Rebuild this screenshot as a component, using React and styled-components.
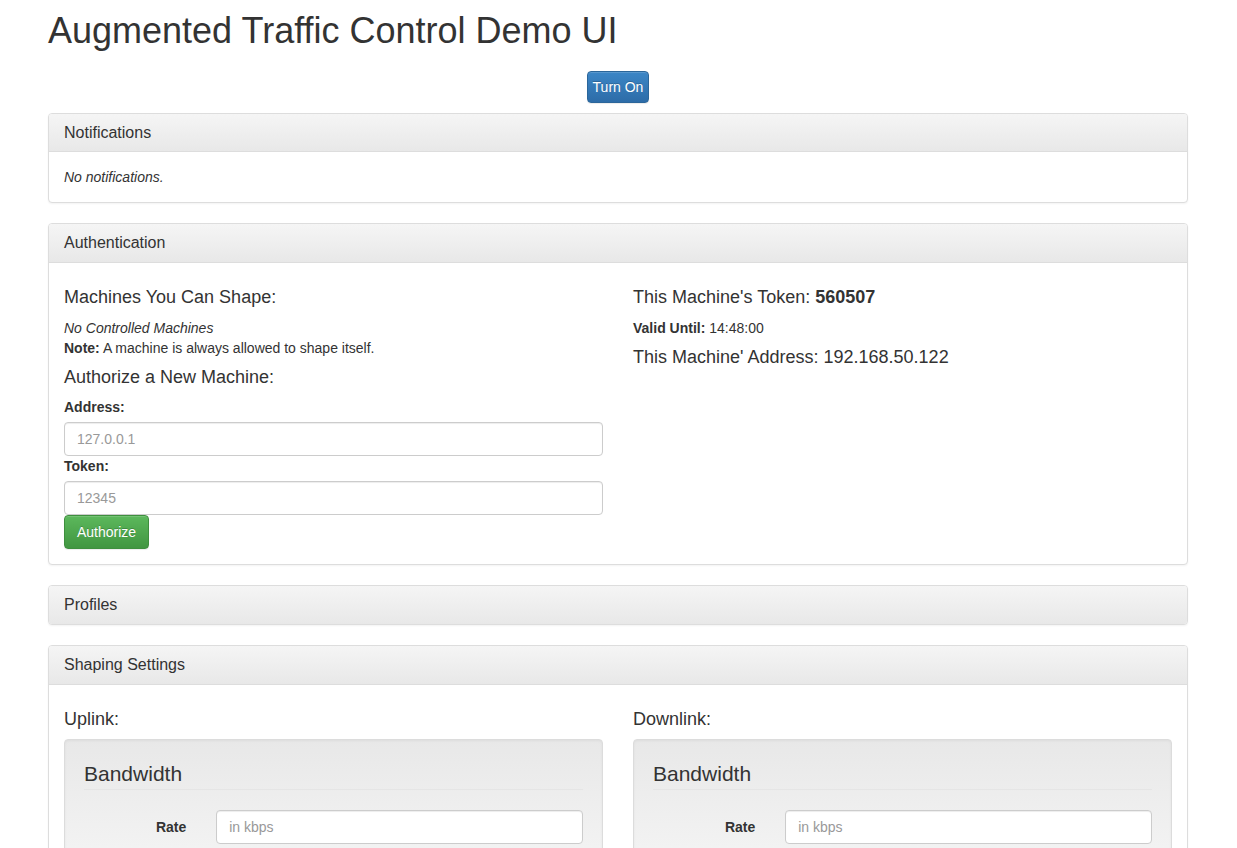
import React from 'react';
import styled, { createGlobalStyle } from 'styled-components';

const GlobalStyle = createGlobalStyle`
  * { box-sizing: border-box; }
  body {
    margin: 0;
    font-family: "Liberation Sans", Arial, sans-serif;
    font-size: 14px;
    line-height: 1.42857143;
    color: #333;
    background: #fff;
  }
  input::placeholder { color: #999; }
`;

const Container = styled.div`
  width: 1170px;
  margin-left: calc((100% - 1170px) / 2 - 0.5px);
  padding: 0 15px;
`;

const Title = styled.h1`
  font-size: 36px;
  font-weight: normal;
  line-height: 1.1;
  margin: 11px 0 10px;
`;

const ButtonBar = styled.div`
  display: flex;
  justify-content: center;
  padding: 10px 0;
`;

const Button = styled.button`
  font-family: inherit;
  font-size: 14px;
  line-height: 20px;
  padding: ${p => (p.$compact ? '5px 5px' : '6px 12px')};
  border-radius: 4px;
  border: 1px solid ${p => (p.$variant === 'success' ? '#3e8f3e' : '#2b669a')};
  color: #fff;
  cursor: pointer;
  text-shadow: 0 -1px 0 rgba(0, 0, 0, 0.2);
  box-shadow: inset 0 1px 0 rgba(255, 255, 255, 0.15), 0 1px 1px rgba(0, 0, 0, 0.075);
  background-image: ${p =>
    p.$variant === 'success'
      ? 'linear-gradient(to bottom, #5cb85c 0, #419641 100%)'
      : 'linear-gradient(to bottom, #3c86c6 0, #2d6ca8 100%)'};
`;

const Panel = styled.section`
  margin-bottom: 20px;
  background: #fff;
  border: 1px solid #ddd;
  border-radius: 4px;
  box-shadow: 0 1px 2px rgba(0, 0, 0, 0.05);
`;

const PanelHeading = styled.div`
  padding: 10px 15px;
  border-bottom: 1px solid #ddd;
  border-radius: 3px 3px 0 0;
  background-image: linear-gradient(to bottom, #f5f5f5 0, #e8e8e8 100%);
  ${p => p.$alone && 'border-bottom: none; border-radius: 3px;'}
`;

const PanelTitle = styled.h3`
  margin: 0;
  font-size: 16px;
  font-weight: normal;
  line-height: 1.1;
`;

const PanelBody = styled.div`
  padding: 15px;
`;

const Row = styled.div`
  display: grid;
  grid-template-columns: 1fr 1fr;
  margin: 0 -15px;
`;

const Col = styled.div`
  padding: 0 15px;
`;

const Heading = styled.h4`
  font-size: 18px;
  font-weight: normal;
  line-height: 1.1;
  margin: 10px 0;
`;

const Line = styled.div`
  font-style: ${p => (p.$italic ? 'italic' : 'normal')};
`;

const Label = styled.label`
  display: inline-block;
  margin-bottom: 5px;
  font-weight: bold;
`;

const Input = styled.input`
  display: block;
  width: 100%;
  height: 34px;
  padding: 6px 12px;
  font-family: inherit;
  font-size: 14px;
  line-height: 20px;
  color: #555;
  background: #fff;
  border: 1px solid #ccc;
  border-radius: 4px;
  box-shadow: inset 0 1px 1px rgba(0, 0, 0, 0.075);
  outline: none;
`;

const Well = styled.div`
  padding: 19px;
  margin-bottom: 20px;
  border: 1px solid #dcdcdc;
  border-radius: 4px;
  background-image: linear-gradient(to bottom, #e8e8e8 0, #f5f5f5 100%);
  box-shadow: inset 0 1px 3px rgba(0, 0, 0, 0.05), 0 1px 0 rgba(255, 255, 255, 0.1);
`;

const Fieldset = styled.fieldset`
  margin: 0;
  padding: 0;
  border: 0;
  min-width: 0;
`;

const Legend = styled.legend`
  display: block;
  width: 100%;
  padding: 0;
  margin-bottom: 20px;
  font-size: 21px;
  line-height: inherit;
  color: #333;
  border-bottom: 1px solid #e5e5e5;
`;

const FormRow = styled.div`
  display: grid;
  grid-template-columns: 3fr 9fr;
  margin: 0 -15px 15px;
`;

const ControlLabel = styled.label`
  padding: 7px 15px 0;
  text-align: right;
  font-weight: bold;
`;

const ControlCell = styled.div`
  padding: 0 15px;
`;

const shaping = [{ legend: 'Bandwidth', fields: [['Rate', 'in kbps']] }];

function LinkSettings({ title }) {
  return (
    <Col>
      <Heading>{title}</Heading>
      {shaping.map(group => (
        <Well key={group.legend}>
          <Fieldset>
            <Legend>{group.legend}</Legend>
            {group.fields.map(([label, hint]) => (
              <FormRow key={label}>
                <ControlLabel>{label}</ControlLabel>
                <ControlCell>
                  <Input placeholder={hint} />
                </ControlCell>
              </FormRow>
            ))}
          </Fieldset>
        </Well>
      ))}
    </Col>
  );
}

export default function App() {
  return (
    <>
      <GlobalStyle />
      <Container>
        <Title>Augmented Traffic Control Demo UI</Title>
        <ButtonBar>
          <Button $compact>Turn On</Button>
        </ButtonBar>

        <Panel>
          <PanelHeading>
            <PanelTitle>Notifications</PanelTitle>
          </PanelHeading>
          <PanelBody>
            <Line $italic>No notifications.</Line>
          </PanelBody>
        </Panel>

        <Panel>
          <PanelHeading>
            <PanelTitle>Authentication</PanelTitle>
          </PanelHeading>
          <PanelBody>
            <Row>
              <Col>
                <Heading>Machines You Can Shape:</Heading>
                <Line $italic>No Controlled Machines</Line>
                <Line>
                  <strong>Note:</strong> A machine is always allowed to shape itself.
                </Line>
                <Heading>Authorize a New Machine:</Heading>
                <Label>Address:</Label>
                <Input placeholder="127.0.0.1" />
                <Label>Token:</Label>
                <Input placeholder="12345" />
                <Button $variant="success">Authorize</Button>
              </Col>
              <Col>
                <Heading>
                  This Machine's Token: <strong>560507</strong>
                </Heading>
                <Line>
                  <strong>Valid Until:</strong> 14:48:00
                </Line>
                <Heading>This Machine' Address: 192.168.50.122</Heading>
              </Col>
            </Row>
          </PanelBody>
        </Panel>

        <Panel>
          <PanelHeading $alone>
            <PanelTitle>Profiles</PanelTitle>
          </PanelHeading>
        </Panel>

        <Panel>
          <PanelHeading>
            <PanelTitle>Shaping Settings</PanelTitle>
          </PanelHeading>
          <PanelBody>
            <Row>
              <LinkSettings title="Uplink:" />
              <LinkSettings title="Downlink:" />
            </Row>
          </PanelBody>
        </Panel>
      </Container>
    </>
  );
}
